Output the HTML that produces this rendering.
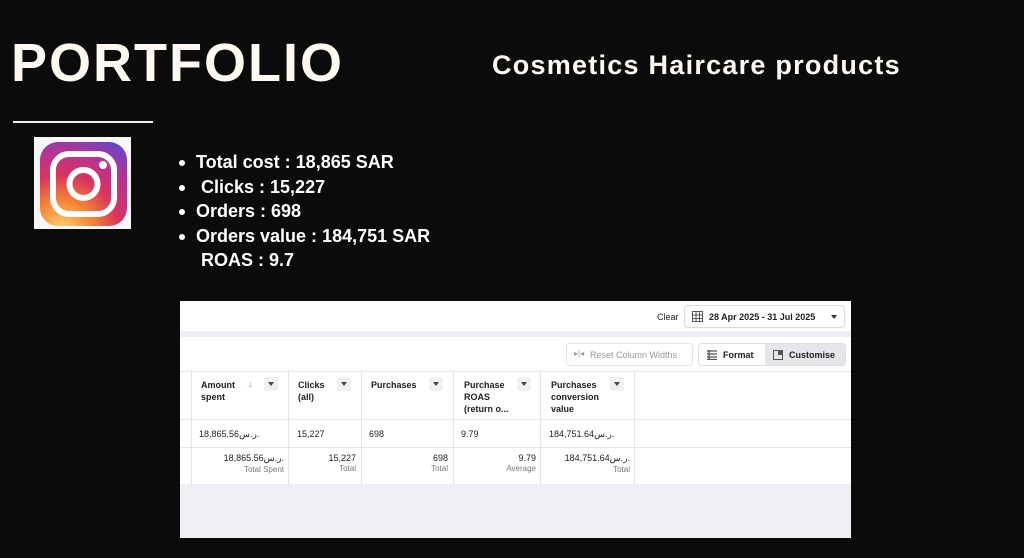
<!DOCTYPE html>
<html><head><meta charset="utf-8"><style>
*{margin:0;padding:0;box-sizing:border-box}
body{width:1024px;height:558px;background:#0b0b0b;position:relative;overflow:hidden;font-family:"Liberation Sans",sans-serif}
.abs{position:absolute}
h1{position:absolute;left:11px;top:31px;font-size:54px;font-weight:bold;color:#fdf8f2;letter-spacing:2px;line-height:64px}
.sub{left:492px;top:48px;font-size:27px;font-weight:bold;color:#fdf8f2;line-height:34px;letter-spacing:1.25px}
.line{left:13px;top:121px;width:140px;height:2px;background:#f4f0ea}
ul{position:absolute;left:178px;top:150px;list-style:none;color:#fff;font-weight:bold;font-size:18px;line-height:24.5px}
ul li{position:relative;padding-left:18px}
ul li.b::before{content:"";position:absolute;left:1px;top:10px;width:6px;height:6px;border-radius:50%;background:#fff}
.shot{left:180px;top:301px;width:671px;height:237px;background:#fff;overflow:hidden;font-size:9px;color:#1c1e21}
.t{position:absolute}
.hd{font-weight:bold;line-height:12px}
.dd{position:absolute;width:14px;height:14px;background:#f0f1f3;border-radius:2px}
.dd::after{content:"";position:absolute;left:4px;top:5px;border-left:3px solid transparent;border-right:3px solid transparent;border-top:4px solid #444}
.vl{position:absolute;width:1px;background:#e3e5e8}
.hl{position:absolute;height:1px;background:#e3e5e8}
.r{text-align:right}
.g{color:#777;font-size:8px}
</style></head><body>
<h1>PORTFOLIO</h1>
<div class="abs sub">Cosmetics Haircare products</div>
<div class="abs line"></div>
<div class="abs" style="left:34px;top:137px;width:97px;height:92px;background:#f7f7f7"></div>
<svg class="abs" style="left:40px;top:142px" width="87" height="84" viewBox="0 0 87 84">
<defs><radialGradient id="g" cx="0.25" cy="1.05" r="1.2">
<stop offset="0" stop-color="#fdd46e"/><stop offset="0.3" stop-color="#f58436"/><stop offset="0.55" stop-color="#d9325e"/><stop offset="0.8" stop-color="#b03596"/><stop offset="1" stop-color="#6446c8"/></radialGradient></defs>
<rect width="87" height="84" rx="18" fill="url(#g)"/>
<rect x="13" y="12" width="61" height="60" rx="16" fill="none" stroke="#fff" stroke-width="6"/>
<circle cx="43.5" cy="42" r="14" fill="none" stroke="#fff" stroke-width="6"/>
<circle cx="63" cy="23" r="4" fill="#fff"/>
</svg>
<ul>
<li class="b">Total cost : 18,865 SAR</li>
<li class="b">&nbsp;Clicks : 15,227</li>
<li class="b">Orders : 698</li>
<li class="b">Orders value : 184,751 SAR</li>
<li>&nbsp;ROAS : 9.7</li>
</ul>
<div class="abs shot">
 <div class="t" style="left:0;top:30px;width:671px;height:6px;background:#eceef4"></div>
 <div class="t" style="left:477px;top:11px">Clear</div>
 <div class="t" style="left:504px;top:4px;width:161px;height:23px;border:1px solid #d8dadd;border-radius:4px;padding:6px 0 0 24px;font-weight:bold;font-size:9px">28 Apr 2025 - 31 Jul 2025</div>
 <svg class="t" style="left:512px;top:10px" width="11" height="11"><rect x="0.5" y="0.5" width="10" height="10" fill="none" stroke="#555"/><path d="M0 4h11M0 7.5h11M4 0v11M7.5 0v11" stroke="#555"/></svg>
 <div class="t" style="left:651px;top:14px;border-left:3px solid transparent;border-right:3px solid transparent;border-top:4px solid #333"></div>
 <div class="t" style="left:386px;top:42px;width:127px;height:23px;border:1px solid #e0e2e5;border-radius:4px;padding:6px 0 0 23px;color:#999">Reset Column Widths</div>
 <div class="t" style="left:394px;top:48px;color:#999;font-size:8px">▸|◂</div>
 <div class="t" style="left:518px;top:42px;width:148px;height:23px;border:1px solid #dcdee1;border-radius:4px;overflow:hidden">
  <div class="t" style="left:66px;top:0;width:82px;height:23px;background:#e4e6ea"></div>
  <div class="t" style="left:24px;top:6px;font-weight:bold">Format</div>
  <div class="t" style="left:90px;top:6px;font-weight:bold">Customise</div>
  <svg class="t" style="left:8px;top:6px" width="10" height="10"><path d="M0 1h10M0 4h10M0 7h10M0 9.5h10M2 0v10" stroke="#555" stroke-width="1.3"/></svg>
  <svg class="t" style="left:74px;top:6px" width="10" height="10"><rect x="0.5" y="0.5" width="9" height="9" fill="none" stroke="#555"/><rect x="5" y="1" width="4" height="4" fill="#555"/></svg>
 </div>
 <div class="hl" style="left:0;top:70px;width:671px"></div>
 <div class="hl" style="left:0;top:118px;width:671px"></div>
 <div class="hl" style="left:0;top:146px;width:671px"></div>
 <div class="vl" style="left:11px;top:70px;height:113px"></div>
 <div class="vl" style="left:108px;top:70px;height:113px"></div>
 <div class="vl" style="left:181px;top:70px;height:113px"></div>
 <div class="vl" style="left:273px;top:70px;height:113px"></div>
 <div class="vl" style="left:360px;top:70px;height:113px"></div>
 <div class="vl" style="left:454px;top:70px;height:113px"></div>
 <div class="t hd" style="left:21px;top:78px">Amount<br>spent</div><div class="t" style="left:68px;top:78px;color:#6a7fd8">↓</div><div class="dd" style="left:84px;top:76px"></div>
 <div class="t hd" style="left:118px;top:78px">Clicks<br>(all)</div><div class="dd" style="left:157px;top:76px"></div>
 <div class="t hd" style="left:191px;top:78px">Purchases</div><div class="dd" style="left:249px;top:76px"></div>
 <div class="t hd" style="left:284px;top:78px">Purchase<br>ROAS<br>(return o...</div><div class="dd" style="left:337px;top:76px"></div>
 <div class="t hd" style="left:371px;top:78px">Purchases<br>conversion<br>value</div><div class="dd" style="left:430px;top:76px"></div>
 <div class="t" style="left:19px;top:128px">18,865.56ر.س.</div>
 <div class="t" style="left:117px;top:128px">15,227</div>
 <div class="t" style="left:189px;top:128px">698</div>
 <div class="t" style="left:281px;top:128px">9.79</div>
 <div class="t" style="left:369px;top:128px">184,751.64ر.س.</div>
 <div class="t r" style="left:12px;top:152px;width:92px">18,865.56ر.س.<br><span class="g">Total Spent</span></div>
 <div class="t r" style="left:109px;top:152px;width:67px">15,227<br><span class="g">Total</span></div>
 <div class="t r" style="left:182px;top:152px;width:86px">698<br><span class="g">Total</span></div>
 <div class="t r" style="left:274px;top:152px;width:82px">9.79<br><span class="g">Average</span></div>
 <div class="t r" style="left:361px;top:152px;width:89px">184,751.64ر.س.<br><span class="g">Total</span></div>
 <div class="t" style="left:0;top:183px;width:671px;height:54px;background:#eef0f5"></div>
</div>
</body></html>
